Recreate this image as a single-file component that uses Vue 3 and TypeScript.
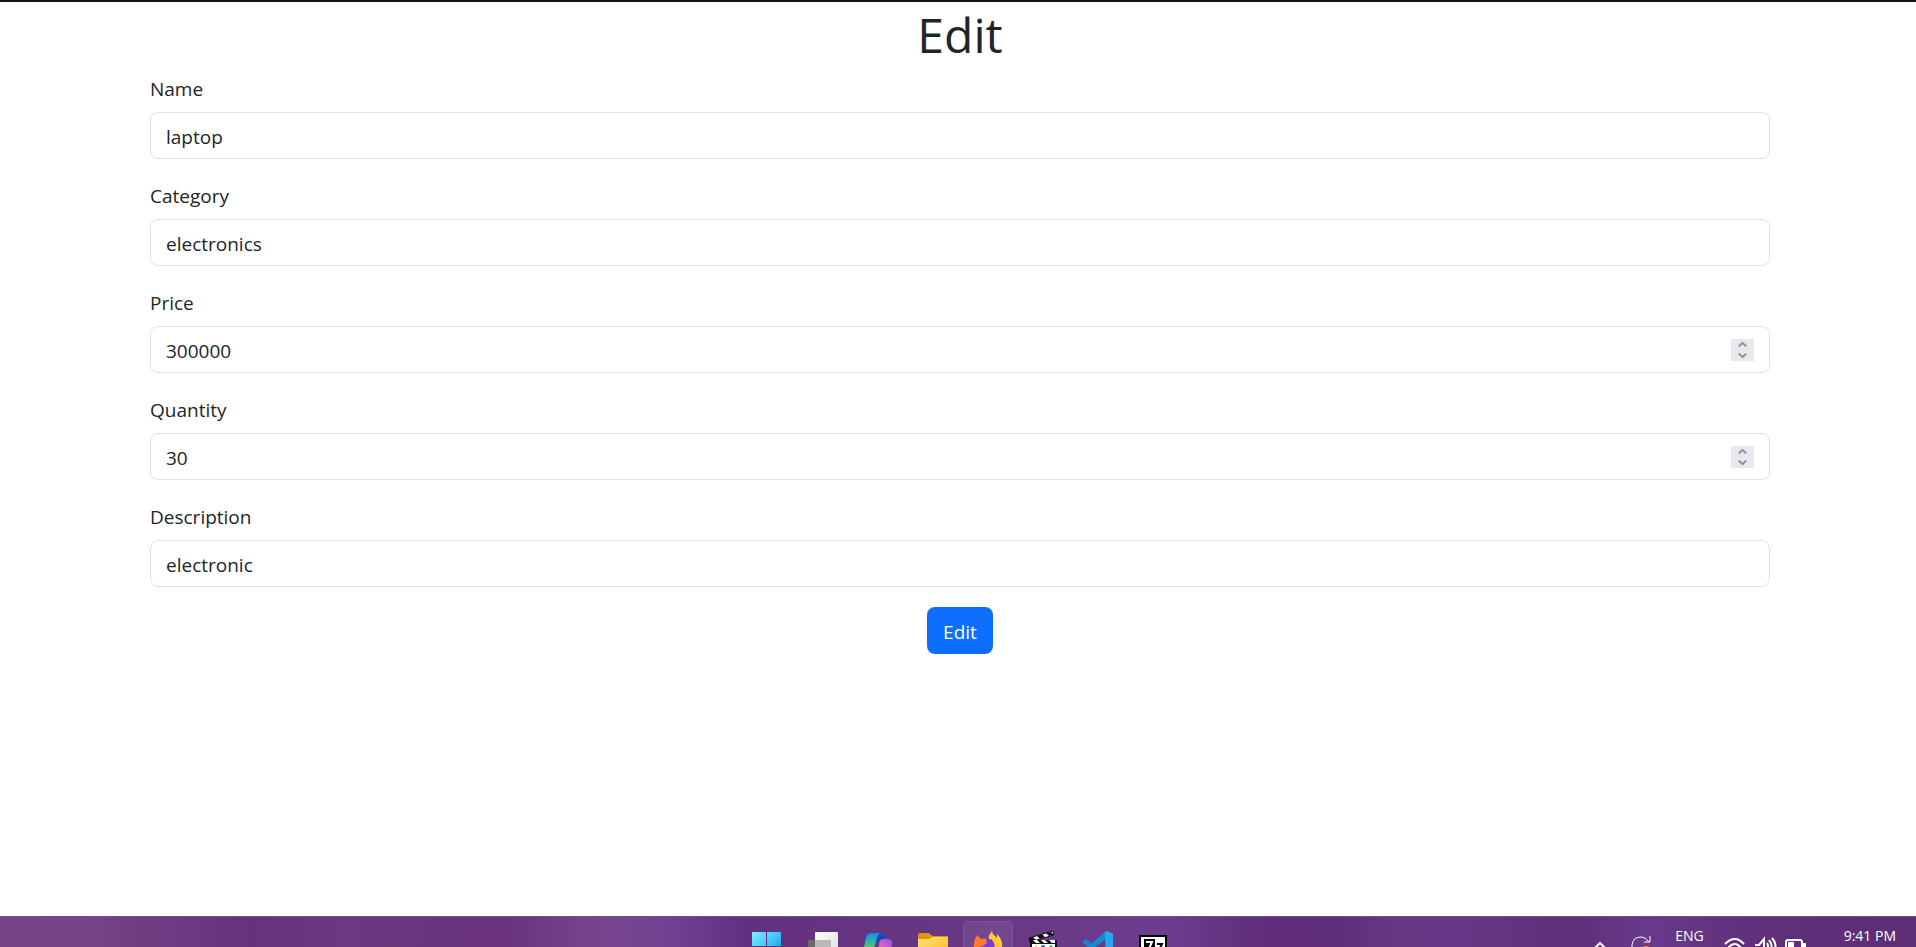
<script setup lang="ts">
import { ref } from 'vue'

interface Field {
  id: string
  label: string
  type: 'text' | 'number'
  value: string | number
}

const fields = ref<Field[]>([
  { id: 'name', label: 'Name', type: 'text', value: 'laptop' },
  { id: 'category', label: 'Category', type: 'text', value: 'electronics' },
  { id: 'price', label: 'Price', type: 'number', value: 300000 },
  { id: 'quantity', label: 'Quantity', type: 'number', value: 30 },
  { id: 'description', label: 'Description', type: 'text', value: 'electronic' },
])

function step(field: Field, amount: number) {
  field.value = Number(field.value) + amount
}
</script>

<template>
  <div class="screen">
    <main class="page">
      <h1>Edit</h1>
      <form @submit.prevent>
        <div v-for="field in fields" :key="field.id" class="field">
          <label :for="field.id">{{ field.label }}</label>
          <div class="control">
            <input :id="field.id" v-model="field.value" :type="field.type" />
            <span v-if="field.type === 'number'" class="spinner">
              <button type="button" :aria-label="`Increase ${field.label}`" @click="step(field, 1)">
                <svg width="9" height="5" viewBox="0 0 9 5"><path d="M.7 4.4 4.5.9l3.8 3.5" /></svg>
              </button>
              <button type="button" :aria-label="`Decrease ${field.label}`" @click="step(field, -1)">
                <svg width="9" height="5" viewBox="0 0 9 5"><path d="M.7.6l3.8 3.5L8.3.6" /></svg>
              </button>
            </span>
          </div>
        </div>
        <button class="submit" type="submit">Edit</button>
      </form>
    </main>

    <footer class="taskbar">
      <nav class="apps" aria-label="Apps">
        <button type="button" aria-label="Start">
          <svg viewBox="0 0 50 44">
            <defs>
              <linearGradient id="win" x1="9" y1="11" x2="38" y2="40" gradientUnits="userSpaceOnUse">
                <stop offset="0" stop-color="#7df0ff" /><stop offset=".5" stop-color="#3fc3fb" /><stop offset="1" stop-color="#0a84d8" />
              </linearGradient>
            </defs>
            <path fill="url(#win)" d="M10 11h13v14H9V12q0-1 1-1zM24 11h13q1 0 1 1v13H24zM9 26h14v14H9zM24 26h14v14H24z" />
          </svg>
        </button>
        <button type="button" aria-label="Task view">
          <svg viewBox="0 0 50 44">
            <defs>
              <linearGradient id="sheet" x1="0" y1="0" x2="1" y2="1">
                <stop offset="0" stop-color="#fff" /><stop offset="1" stop-color="#dcdcdc" />
              </linearGradient>
            </defs>
            <rect x="10" y="19" width="23" height="22" rx="1" fill="#6b6b6b" />
            <rect x="17" y="11" width="23" height="24" rx="1" fill="url(#sheet)" />
            <path d="M17 19h15q1 0 1 1v15H17z" fill="#b9b9b9" />
          </svg>
        </button>
        <button type="button" aria-label="Copilot">
          <svg viewBox="0 0 50 44">
            <defs>
              <linearGradient id="copA" x1="0" y1="0" x2="0" y2="1">
                <stop offset="0" stop-color="#1c86dd" /><stop offset=".3" stop-color="#26b0b8" /><stop offset=".6" stop-color="#5cc46a" /><stop offset="1" stop-color="#ffd500" />
              </linearGradient>
              <linearGradient id="copB" x1="1" y1="0" x2="0" y2="1">
                <stop offset="0" stop-color="#9254e8" /><stop offset=".35" stop-color="#cf5fd0" /><stop offset="1" stop-color="#ff7a56" />
              </linearGradient>
            </defs>
            <path fill="#1648c4" d="M22 12h5q4 0 5 4l1 3h-6l-3 3h-4z" />
            <path fill="url(#copA)" d="M18 12h10q-3 1-4 5l-5 17q-1 2-4 2h-2q-4 0-3-6l3-13q1-5 5-5z" />
            <path fill="url(#copB)" d="M30 18h5q5 0 4 6l-4 12q-2 5-7 5h-8q3 0 4-5l2-13q1-5 4-5z" />
          </svg>
        </button>
        <button type="button" aria-label="File Explorer">
          <svg viewBox="0 0 50 44">
            <defs>
              <linearGradient id="folder" x1="0" y1="0" x2="1" y2="1">
                <stop offset="0" stop-color="#ffe07a" /><stop offset="1" stop-color="#ffb91a" />
              </linearGradient>
            </defs>
            <path fill="#dc9808" d="M10 14q0-2 2-2h8q2 0 3 2l2 1h14q1 0 1 1v8H10z" />
            <path fill="url(#folder)" d="M10 18h10q2 0 3-1l1-1h15q1 0 1 1v20H10z" />
          </svg>
        </button>
        <button type="button" class="active" aria-label="Firefox">
          <svg viewBox="0 0 50 44">
            <defs>
              <linearGradient id="fox" x1="1" y1="0" x2="0" y2="1">
                <stop offset="0" stop-color="#ffe145" /><stop offset=".5" stop-color="#ffb32d" /><stop offset="1" stop-color="#ff4b35" />
              </linearGradient>
            </defs>
            <circle cx="25" cy="28" r="10" fill="#7739df" />
            <path fill="url(#fox)" d="M26 18q-1-3 1-5l2-3q0 3 3 5l2 2v-4q6 6 5 14 0 13-14 13-14 0-14-14h8q5 8 11 3 3-4 0-9-1-2-4-2z" />
            <path fill="#ff7a30" d="M14 14l4 4q4-1 6 0l-1 2 1 2-4 3-9 2q-1-7 3-13z" />
          </svg>
        </button>
        <button type="button" aria-label="Video editor">
          <svg viewBox="0 0 50 44">
            <path fill="#fff" stroke="#111" stroke-width="2" d="M13 20h25v20H13z" />
            <path fill="#fff" stroke="#111" d="m11 17 24-7 1 4-24 7z" />
            <path fill="#111" d="m11 17 4-1 3 3-5 2h-2zM19 15l5-2 3 3-5 2zM28 12l5-1 3 3-5 1z" />
            <path fill="#111" d="M12 19h27v4H12z" />
            <path fill="#fff" d="m15 19 3 3h4l-3-3zm8 0 3 3h4l-3-3zm8 0 3 3h3v-3z" />
            <circle cx="18" cy="26" r="1" fill="#e8a33c" />
            <circle cx="25" cy="26" r="2" fill="#315b9b" />
            <path fill="#2d9250" d="m30 27 3-3 3 3z" />
          </svg>
        </button>
        <button type="button" aria-label="Visual Studio Code">
          <svg viewBox="0 0 50 44">
            <path fill="#1686cf" d="m10 20 3-2 20 16v6L10 22z" />
            <path fill="#168bd2" d="m33 10-22 19q-1 1 0 2l2 2 20-15z" />
            <path fill="#2ba8ed" d="m32 11 2-1 6 3v24l-7 4z" />
          </svg>
        </button>
        <button type="button" aria-label="7-Zip">
          <svg viewBox="0 0 50 44">
            <path fill="#fff" stroke="#000" stroke-width="2" d="M12 15h26v25H12z" />
            <path fill="#000" d="M16 18h11v19H16z" />
            <path fill="none" stroke="#fff" stroke-width="2" d="M18 21h6l-4 9" />
            <path fill="none" stroke="#000" stroke-width="2" d="M29 23h5l-4 8h5" />
          </svg>
        </button>
      </nav>

      <div class="tray">
        <svg class="chevron" viewBox="0 0 14 26"><path d="m1 28 6-6 6 6" /></svg>
        <svg class="update" viewBox="0 0 20 26">
          <path d="M1 28V24q1-8 9-8 5 0 8 5M19 15v6h-6" />
          <circle cx="15" cy="29" r="4" />
        </svg>
        <span class="lang">ENG</span>
        <svg class="status" viewBox="0 0 84 26">
          <path d="M1 23q10-10 19 0M4 27q7-8 13 0" />
          <path d="M31 24h4l5-6v12M43 22q2 3 0 7M45 19q4 5 2 10M48 17q5 6 3 12" />
          <rect x="62" y="19" width="16" height="12" rx="2" />
          <path class="solid" d="M64 21h6v7h-6zM79 22h3v5h-3z" />
        </svg>
        <time>9:41 PM</time>
      </div>
    </footer>
  </div>
</template>

<style>
body {
  margin: 0;
}
</style>

<style scoped>
.screen {
  box-sizing: border-box;
  display: flex;
  flex-direction: column;
  min-height: 100vh;
  border-top: 2px solid #15121c;
  background: #fff;
  color: #212529;
  font-family: "Segoe UI", "Open Sans", "Noto Sans", sans-serif;
}
.page {
  flex: 1;
  padding: 3px 146px 20px 150px;
}
h1 {
  margin: 0 0 7px;
  font-size: 48px;
  font-weight: 400;
  line-height: 60px;
  text-align: center;
}
form {
  display: flex;
  flex-direction: column;
  gap: 20px;
}
label {
  display: block;
  margin-bottom: 6px;
  font-size: 19px;
  line-height: 34px;
}
.control {
  box-sizing: border-box;
  display: flex;
  align-items: center;
  height: 47px;
  padding: 0 15px;
  border: 1px solid #dee2e6;
  border-radius: 8px;
}
input {
  flex: 1;
  min-width: 0;
  padding: 2px 0 0;
  border: 0;
  outline: 0;
  background: none;
  color: inherit;
  font-family: inherit;
  font-size: 19px;
  line-height: 30px;
  appearance: textfield;
}
input::-webkit-inner-spin-button {
  appearance: none;
  margin: 0;
}
.spinner {
  display: flex;
  flex-direction: column;
  width: 23px;
  height: 22px;
  background: #e9e9ed;
}
.spinner button {
  display: flex;
  flex: 1;
  align-items: center;
  justify-content: center;
  padding: 0;
  border: 0;
  background: none;
}
.spinner path {
  fill: none;
  stroke: #8f8f9d;
  stroke-width: 2;
}
.submit {
  align-self: center;
  height: 47px;
  padding: 2px 16px 0;
  border: 0;
  border-radius: 8px;
  background: #0d6efd;
  color: #fff;
  font-family: inherit;
  font-size: 19px;
}
.taskbar {
  box-sizing: border-box;
  display: grid;
  grid-template-columns: 1fr auto 1fr;
  height: 31px;
  padding: 4px 0 0 5px;
  overflow: hidden;
  border-top: 1px solid #705184;
  background: linear-gradient(90deg, #754287 0%, #764488 4%, #67327b 13%, #6d387f 18%, #6a337b 26%, #784690 32%, #704193 35%, #613082 39%, #65337f 43%, #693985 52%, #6c3c8f 61%, #5f2d79 66%, #5f2e7b 70%, #683786 73%, #683888 76%, #5f2f78 82%, #693a8c 86%, #5f2f7a 92%, #5d2e75 100%);
}
.apps {
  display: flex;
  grid-column: 2;
  gap: 5px;
}
.apps button {
  width: 50px;
  height: 44px;
  padding: 0;
  border: 0;
  border-radius: 5px;
  background: none;
}
.apps .active {
  background: #ffffff12;
  box-shadow: inset 0 0 0 1px #ffffff12;
}
.apps svg {
  display: block;
  width: 50px;
  height: 44px;
}
.tray {
  display: flex;
  justify-content: flex-end;
  height: 26px;
  padding-right: 20px;
  color: #fff;
  font-size: 14px;
  line-height: 30px;
}
.tray svg {
  height: 26px;
  fill: none;
  stroke: #fff;
  stroke-width: 2;
}
.chevron {
  width: 14px;
  margin-right: 24px;
}
.tray .update {
  width: 20px;
  margin-right: 24px;
  stroke-width: 1;
}
.update circle {
  fill: #f7941d;
  stroke: none;
}
.status {
  width: 84px;
  margin: 0 36px 0 20px;
}
.status .solid {
  fill: #fff;
  stroke: none;
}
</style>
